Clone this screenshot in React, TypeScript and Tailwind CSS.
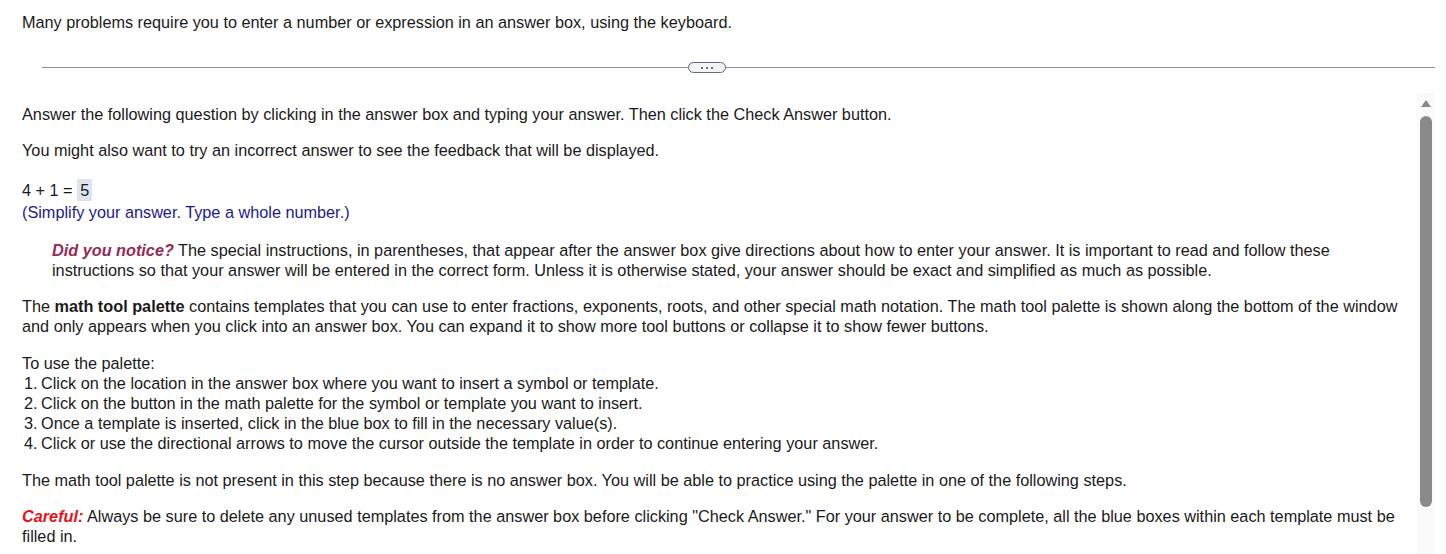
import { useState } from "react";

const steps = [
  "Click on the location in the answer box where you want to insert a symbol or template.",
  "Click on the button in the math palette for the symbol or template you want to insert.",
  "Once a template is inserted, click in the blue box to fill in the necessary value(s).",
  "Click or use the directional arrows to move the cursor outside the template in order to continue entering your answer.",
];

export default function App() {
  const [answer] = useState("5");

  return (
    <div className="flex h-screen flex-col overflow-hidden bg-white font-['Liberation_Sans',Arial,sans-serif] text-[16.25px] leading-5 text-[#1a1a1a]">
      {/* top pane */}
      <div className="h-[62px] shrink-0 px-[22px] pt-3">
        <p>Many problems require you to enter a number or expression in an answer box, using the keyboard.</p>
      </div>

      {/* splitter */}
      <div className="flex h-[11px] shrink-0 items-center pl-[42px] pr-[11px]">
        <div className="h-px w-[646px] bg-[#8a8f9c]" />
        <button className="flex h-[11px] w-[38px] shrink-0 items-center justify-center gap-[3px] rounded-full border border-[#5f6675] bg-[#f2f4f7]">
          <span className="h-[2px] w-[2px] rounded-full bg-[#3c4350]" />
          <span className="h-[2px] w-[2px] rounded-full bg-[#3c4350]" />
          <span className="h-[2px] w-[2px] rounded-full bg-[#3c4350]" />
        </button>
        <div className="h-px flex-1 bg-[#8a8f9c]" />
      </div>

      {/* bottom pane */}
      <div className="flex min-h-0 flex-1 pt-[20px]">
        <div className="min-w-0 flex-1 pl-[22px] pr-[14px] pt-[11px]">
          <p>Answer the following question by clicking in the answer box and typing your answer. Then click the Check Answer button.</p>
          <p className="mt-4">You might also want to try an incorrect answer to see the feedback that will be displayed.</p>

          <div className="mt-[19px] flex h-[22px] items-center">
            <span>4 + 1 =&nbsp;</span>
            <span className="flex h-[22px] items-center bg-[#dce4ef] px-[3px]">{answer}</span>
          </div>
          <p className="mt-[1px] text-[#1c1a8a]">(Simplify your answer. Type a whole number.)</p>

          <p className="ml-[30px] mt-[18px]">
            <span className="font-bold italic text-[#952a55]">Did you notice?</span> The special instructions, in parentheses, that appear after the answer box give directions about how to enter your answer. It is important to read and follow these instructions so that your answer will be entered in the correct form. Unless it is otherwise stated, your answer should be exact and simplified as much as possible.
          </p>

          <p className="mt-4">
            The <span className="font-bold">math tool palette</span> contains templates that you can use to enter fractions, exponents, roots, and other special math notation. The math tool palette is shown along the bottom of the window and only appears when you click into an answer box. You can expand it to show more tool buttons or collapse it to show fewer buttons.
          </p>

          <p className="mt-[17px]">To use the palette:</p>
          <ol>
            {steps.map((s, i) => (
              <li key={i} className="flex">
                <span className="w-[19px] shrink-0 pl-[2px]">{i + 1}.</span>
                <span>{s}</span>
              </li>
            ))}
          </ol>

          <p className="mt-[17px]">The math tool palette is not present in this step because there is no answer box. You will be able to practice using the palette in one of the following steps.</p>

          <p className="mt-4">
            <span className="font-bold italic text-[#e5131a]">Careful:</span> Always be sure to delete any unused templates from the answer box before clicking "Check Answer." For your answer to be complete, all the blue boxes within each template must be filled in.
          </p>
        </div>

        {/* scrollbar */}
        <div className="mr-3 flex w-[17px] shrink-0 flex-col items-center bg-[#fafafa] pt-[7px]">
          <svg width="10" height="7" viewBox="0 0 10 7" className="fill-[#8a8a8a]">
            <path d="M5 0 L10 7 L0 7 Z" />
          </svg>
          <div className="mt-[9px] h-[391px] w-[12px] rounded-full bg-[#8a8a8a]" />
        </div>
      </div>
    </div>
  );
}
